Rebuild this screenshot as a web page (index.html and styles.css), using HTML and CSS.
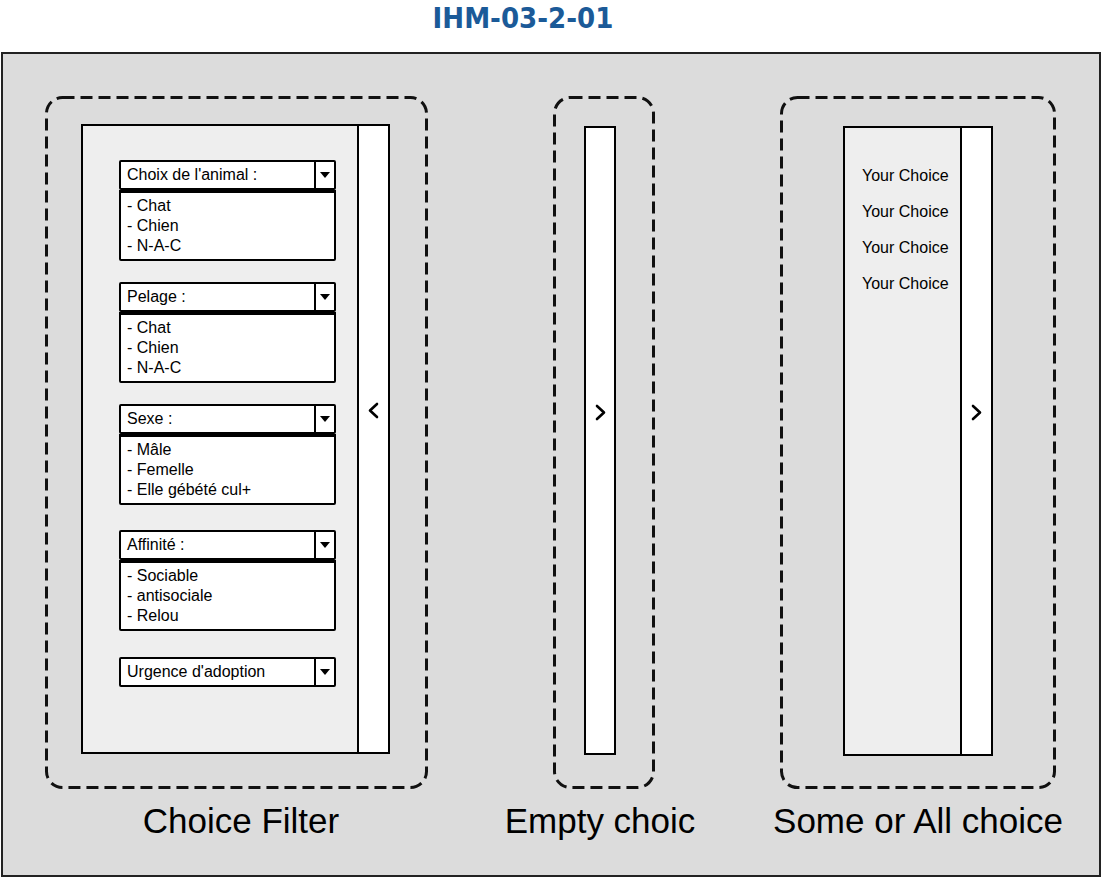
FILE: index.html
```html
<!DOCTYPE html>
<html lang="fr">
<head>
    <meta charset="UTF-8">
    <meta name="viewport" content="width=device-width, initial-scale=1.0">
    <title>IHM-03-2-01</title>
    <link rel="stylesheet" href="styles.css">
</head>
<body>
    <div class="title">IHM-03-2-01</div>

    <div class="frame">
        <!-- Colonne 1 : filtre -->
        <div class="col col-filter">
            <div class="zone zone-filter">
                <svg class="dash" width="383" height="693"><rect x="1.5" y="1.5" width="380" height="690" rx="16"/></svg>
                <div class="panel panel-filter">
                    <div class="panel-main">
                        <div class="combo">
                            <div class="combo-head"><span class="combo-label">Choix de l'animal :</span><span class="combo-btn"><svg width="10" height="6"><polygon points="0,0 10,0 5,6"/></svg></span></div>
                            <div class="combo-list">
                                <div>- Chat</div>
                                <div>- Chien</div>
                                <div>- N-A-C</div>
                            </div>
                        </div>
                        <div class="combo">
                            <div class="combo-head"><span class="combo-label">Pelage :</span><span class="combo-btn"><svg width="10" height="6"><polygon points="0,0 10,0 5,6"/></svg></span></div>
                            <div class="combo-list">
                                <div>- Chat</div>
                                <div>- Chien</div>
                                <div>- N-A-C</div>
                            </div>
                        </div>
                        <div class="combo">
                            <div class="combo-head"><span class="combo-label">Sexe :</span><span class="combo-btn"><svg width="10" height="6"><polygon points="0,0 10,0 5,6"/></svg></span></div>
                            <div class="combo-list">
                                <div>- Mâle</div>
                                <div>- Femelle</div>
                                <div>- Elle gébété cul+</div>
                            </div>
                        </div>
                        <div class="combo">
                            <div class="combo-head"><span class="combo-label">Affinité :</span><span class="combo-btn"><svg width="10" height="6"><polygon points="0,0 10,0 5,6"/></svg></span></div>
                            <div class="combo-list">
                                <div>- Sociable</div>
                                <div>- antisociale</div>
                                <div>- Relou</div>
                            </div>
                        </div>
                        <div class="combo">
                            <div class="combo-head"><span class="combo-label">Urgence d'adoption</span><span class="combo-btn"><svg width="10" height="6"><polygon points="0,0 10,0 5,6"/></svg></span></div>
                        </div>
                    </div>
                    <div class="panel-side">
                        <svg class="chevron" width="11" height="17"><polyline points="9,2 2,8.5 9,15"/></svg>
                    </div>
                </div>
            </div>
            <div class="caption caption-filter">Choice Filter</div>
        </div>

        <!-- Colonne 2 : vide -->
        <div class="col col-empty">
            <div class="zone zone-empty">
                <svg class="dash" width="102" height="693"><rect x="1.5" y="1.5" width="99" height="690" rx="16"/></svg>
                <div class="bar-closed">
                    <svg class="chevron" width="11" height="17"><polyline points="2,2 9,8.5 2,15"/></svg>
                </div>
            </div>
            <div class="caption caption-empty">Empty choic</div>
        </div>

        <!-- Colonne 3 : choix -->
        <div class="col col-choice">
            <div class="zone zone-choice">
                <svg class="dash" width="276" height="693"><rect x="1.5" y="1.5" width="273" height="690" rx="16"/></svg>
                <div class="panel panel-choice">
                    <div class="panel-main choice-list">
                        <div>Your Choice</div>
                        <div>Your Choice</div>
                        <div>Your Choice</div>
                        <div>Your Choice</div>
                    </div>
                    <div class="panel-side">
                        <svg class="chevron" width="11" height="17"><polyline points="2,2 9,8.5 2,15"/></svg>
                    </div>
                </div>
            </div>
            <div class="caption">Some or All choice</div>
        </div>
    </div>
</body>
</html>
```

FILE: styles.css
```css
body {
    margin: 0;
    padding: 0;
    background-color: #ffffff;
    color: #000000;
    font-family: "Liberation Sans", Arial, sans-serif;
}

.title {
    height: 52px;
    line-height: 36px;
    padding-right: 56px;
    text-align: center;
    font-family: "DejaVu Sans Condensed", "DejaVu Sans", sans-serif;
    font-weight: bold;
    font-size: 29px;
    color: #1b5a98;
}

.frame {
    margin: 0 1px;
    height: 825px;
    box-sizing: border-box;
    border: 2px solid #222;
    background-color: #dcdcdc;
    padding: 42px 0 0 42px;
    display: flex;
    gap: 125px;
}

.col {
    flex: none;
    display: flex;
    flex-direction: column;
    align-items: center;
}

.col-filter {
    width: 383px;
}

.col-empty {
    width: 102px;
}

.col-choice {
    width: 276px;
}

.zone {
    position: relative;
    height: 693px;
    box-sizing: border-box;
    align-self: stretch;
}

.zone-filter {
    padding: 28px 0 0 36px;
}

.zone-empty {
    padding: 30px 0 0 31px;
}

.zone-choice {
    padding: 30px 0 0 63px;
}

.dash {
    position: absolute;
    left: 0;
    top: 0;
    pointer-events: none;
}

.dash rect {
    fill: none;
    stroke: #111;
    stroke-width: 3;
    stroke-dasharray: 12 6;
}

.caption {
    margin-top: 12px;
    font-size: 35px;
    line-height: 40px;
    white-space: nowrap;
}

.caption-filter {
    padding-left: 9px;
}

.caption-empty {
    padding-right: 8px;
}

/* panneaux */
.panel {
    display: flex;
    height: 630px;
    box-sizing: border-box;
    border: 2px solid #000;
}

.panel-filter {
    width: 309px;
}

.panel-choice {
    width: 150px;
}

.panel-main {
    flex: 1;
    background-color: #eeeeee;
}

.panel-side {
    width: 29px;
    background-color: #ffffff;
    border-left: 2px solid #000;
    display: flex;
    justify-content: center;
}

.chevron {
    margin-top: 276px;
}

.chevron polyline {
    fill: none;
    stroke: #000;
    stroke-width: 2.6;
    stroke-linecap: round;
    stroke-linejoin: round;
}

.bar-closed {
    width: 32px;
    height: 629px;
    box-sizing: border-box;
    border: 2px solid #000;
    background-color: #ffffff;
    display: flex;
    justify-content: center;
}

/* listes déroulantes */
.panel-filter .panel-main {
    padding: 34px 0 0 36px;
}

.combo {
    width: 217px;
    margin-bottom: 21px;
    font-size: 16px;
}

.combo:nth-child(3) {
    margin-bottom: 25px;
}

.combo:nth-child(4) {
    margin-bottom: 26px;
}

.combo-head {
    display: flex;
    height: 30px;
    box-sizing: border-box;
    border: 2px solid #000;
    border-radius: 2px;
    background-color: #ffffff;
}

.combo-label {
    flex: 1;
    padding-left: 6px;
    line-height: 26px;
    white-space: nowrap;
}

.combo-btn {
    width: 18px;
    border-left: 2px solid #000;
    display: flex;
    align-items: center;
    justify-content: center;
}

.combo-list {
    border: 2px solid #000;
    border-top-width: 3px;
    border-radius: 0 0 2px 2px;
    background-color: #ffffff;
    padding: 3px 0 3px 6px;
    line-height: 20px;
}

.choice-list {
    padding: 38px 0 0 17px;
    font-size: 16px;
    line-height: 20px;
    display: flex;
    flex-direction: column;
    gap: 16px;
}
```
